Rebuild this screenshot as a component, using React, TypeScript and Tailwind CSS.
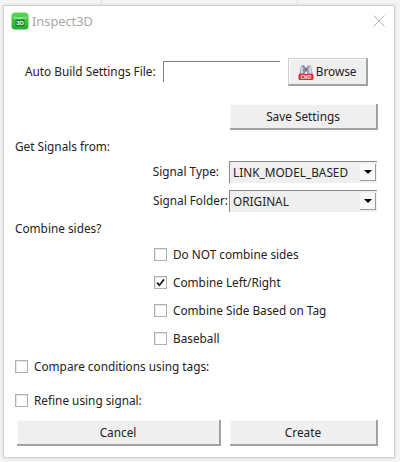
import React from "react";

const FONT = "font-['Noto_Sans','Open_Sans',sans-serif]";

function AppIcon() {
  return (
    <svg width="18" height="18" viewBox="0 0 18 18" aria-hidden>
      <defs>
        <linearGradient id="appGreen" x1="0" y1="0" x2="0" y2="1">
          <stop offset="0" stopColor="#5ada54" />
          <stop offset="1" stopColor="#22ab2c" />
        </linearGradient>
      </defs>
      <rect width="17" height="17" x="0.5" y="0.5" rx="3.5" fill="url(#appGreen)" />
      <text x="9" y="6.6" textAnchor="middle" fontSize="4" fill="#e6fae4" fontFamily="Liberation Sans, sans-serif">
        Inspect
      </text>
      <rect x="4.5" y="7.5" width="9" height="7" rx="0.5" fill="#17862a" />
      <text x="9" y="13.2" textAnchor="middle" fontSize="6" fontWeight="700" fill="#eafbe8" fontFamily="Liberation Sans, sans-serif">
        3D
      </text>
    </svg>
  );
}

function BrowseIcon() {
  return (
    <svg width="16" height="16" viewBox="0 0 16 16" aria-hidden>
      <path d="M1 11 L3 2.5 Q4 0.5 6.3 1 L7.2 4 L7.2 11 Z" fill="#8d93a8" />
      <path d="M15 11 L13 2.5 Q12 0.5 9.7 1 L8.8 4 L8.8 11 Z" fill="#a0a5b8" />
      <rect x="6.8" y="3.5" width="2.4" height="4" fill="#6e7388" />
      <path d="M3.2 3.5 L4.8 2.6 L4.8 9 L2.4 9 Z" fill="#d2d5df" />
      <path d="M12.8 3.5 L11.2 2.6 L11.2 9 L13.6 9 Z" fill="#dadce5" />
      <rect x="0.5" y="10" width="15" height="6" rx="1.5" fill="#cf3338" />
      <text x="8" y="14.7" textAnchor="middle" fontSize="4.6" fontWeight="700" fill="#fbe3e3" fontFamily="Liberation Sans, sans-serif">
        CMD
      </text>
    </svg>
  );
}

function Check({ label, checked }: { label: string; checked?: boolean }) {
  return (
    <div className="flex items-center gap-[6px]">
      <div className="flex h-[13px] w-[13px] shrink-0 items-center justify-center border border-[#b0b0b0] bg-white shadow-[inset_1px_1px_0_#e8e8e8]">
        {checked ? (
          <svg width="11" height="11" viewBox="0 0 11 11" aria-hidden>
            <path d="M2 5.6 L4.4 8.2 L9 2.4" fill="none" stroke="#1a1a1a" strokeWidth="1.7" />
          </svg>
        ) : null}
      </div>
      <span>{label}</span>
    </div>
  );
}

function Btn({ children, className }: { children: React.ReactNode; className?: string }) {
  return (
    <button
      className={`flex items-center justify-center gap-[2px] border-r-2 border-b-2 border-[#a2a2a2] bg-[#efefef] pt-[1px] shadow-[inset_1px_1px_0_#fafafa] ${className ?? ""}`}
    >
      {children}
    </button>
  );
}

function Select({ value }: { value: string }) {
  return (
    <div className="flex h-[22px] w-[148px] items-center justify-between border-t border-l border-[#8a8a8a] bg-[#efefef] pr-[1px] pl-[3px]">
      <span>{value}</span>
      <div className="flex h-[17px] w-[16px] items-center justify-center border-r border-b border-[#9a9a9a] bg-[#f8f8f8]">
        <div className="h-0 w-0 border-x-[4px] border-t-[4px] border-x-transparent border-t-black" />
      </div>
    </div>
  );
}

export default function App() {
  return (
    <div className={`h-[462px] w-[400px] overflow-hidden bg-[#f5f5f5] pl-[3px] text-[11.8px] text-[#222] ${FONT}`}>
      <div className="flex h-[5px]">
        <div className="w-[99px] border-r border-[#e2e2e2]" />
        <div className="w-[196px] border-r border-[#e2e2e2]" />
      </div>
      <div className="h-[453px] w-[392px] border border-[#d2d2d2] bg-white shadow-[0_0_3px_#cfcfcf]">
        <div className="flex h-[52px] items-start pt-[6px] pr-[9px] pl-[7px]">
          <AppIcon />
          <span className="ml-[3px] text-[12.8px] leading-[18px] text-[#a8a8a8]">Inspect3D</span>
          <svg className="mt-[3px] ml-auto" width="12" height="12" viewBox="0 0 12 12" aria-hidden>
            <path d="M0.5 0.5 L11.5 11.5 M11.5 0.5 L0.5 11.5" stroke="#a8a8a8" strokeWidth="0.9" fill="none" />
          </svg>
        </div>

        <div className="flex h-[28px] items-center pl-[21px]">
          <span>Auto Build Settings File:</span>
          <div className="mt-[3px] ml-[7px] h-[21px] w-[117px] self-start border-t border-l border-[#808080]" />
          <Btn className="ml-[8px] h-[28px] w-[80px] border-t border-l border-t-[#cfcfcf] border-l-[#cfcfcf]">
            <BrowseIcon />
            <span>Browse</span>
          </Btn>
        </div>

        <div className="mt-[18px] flex justify-end pr-[16px]">
          <Btn className="h-[26px] w-[148px]">Save Settings</Btn>
        </div>

        <div className="mt-[7px] pl-[11px] leading-[18px]">Get Signals from:</div>

        <div className="mt-[6px] flex flex-col gap-[7px] pr-[17px]">
          <div className="flex items-center justify-end">
            <span className="mr-[10px]">Signal Type:</span>
            <Select value="LINK_MODEL_BASED" />
          </div>
          <div className="flex items-center justify-end">
            <span className="mr-[1px]">Signal Folder:</span>
            <Select value="ORIGINAL" />
          </div>
        </div>

        <div className="mt-[7px] pl-[11px] leading-[18px]">Combine sides?</div>

        <div className="mt-[8px] flex flex-col gap-[10px] pl-[150px] leading-[18px]">
          <Check label="Do NOT combine sides" />
          <Check label="Combine Left/Right" checked />
          <Check label="Combine Side Based on Tag" />
          <Check label="Baseball" />
        </div>

        <div className="mt-[10px] pl-[11px] leading-[18px]">
          <Check label="Compare conditions using tags:" />
        </div>
        <div className="mt-[16px] pl-[11px] leading-[18px]">
          <Check label="Refine using signal:" />
        </div>

        <div className="mt-[11px] flex gap-[9px] pl-[13px]">
          <Btn className="h-[26px] w-[204px]">Cancel</Btn>
          <Btn className="h-[26px] w-[148px]">Create</Btn>
        </div>
      </div>
    </div>
  );
}
